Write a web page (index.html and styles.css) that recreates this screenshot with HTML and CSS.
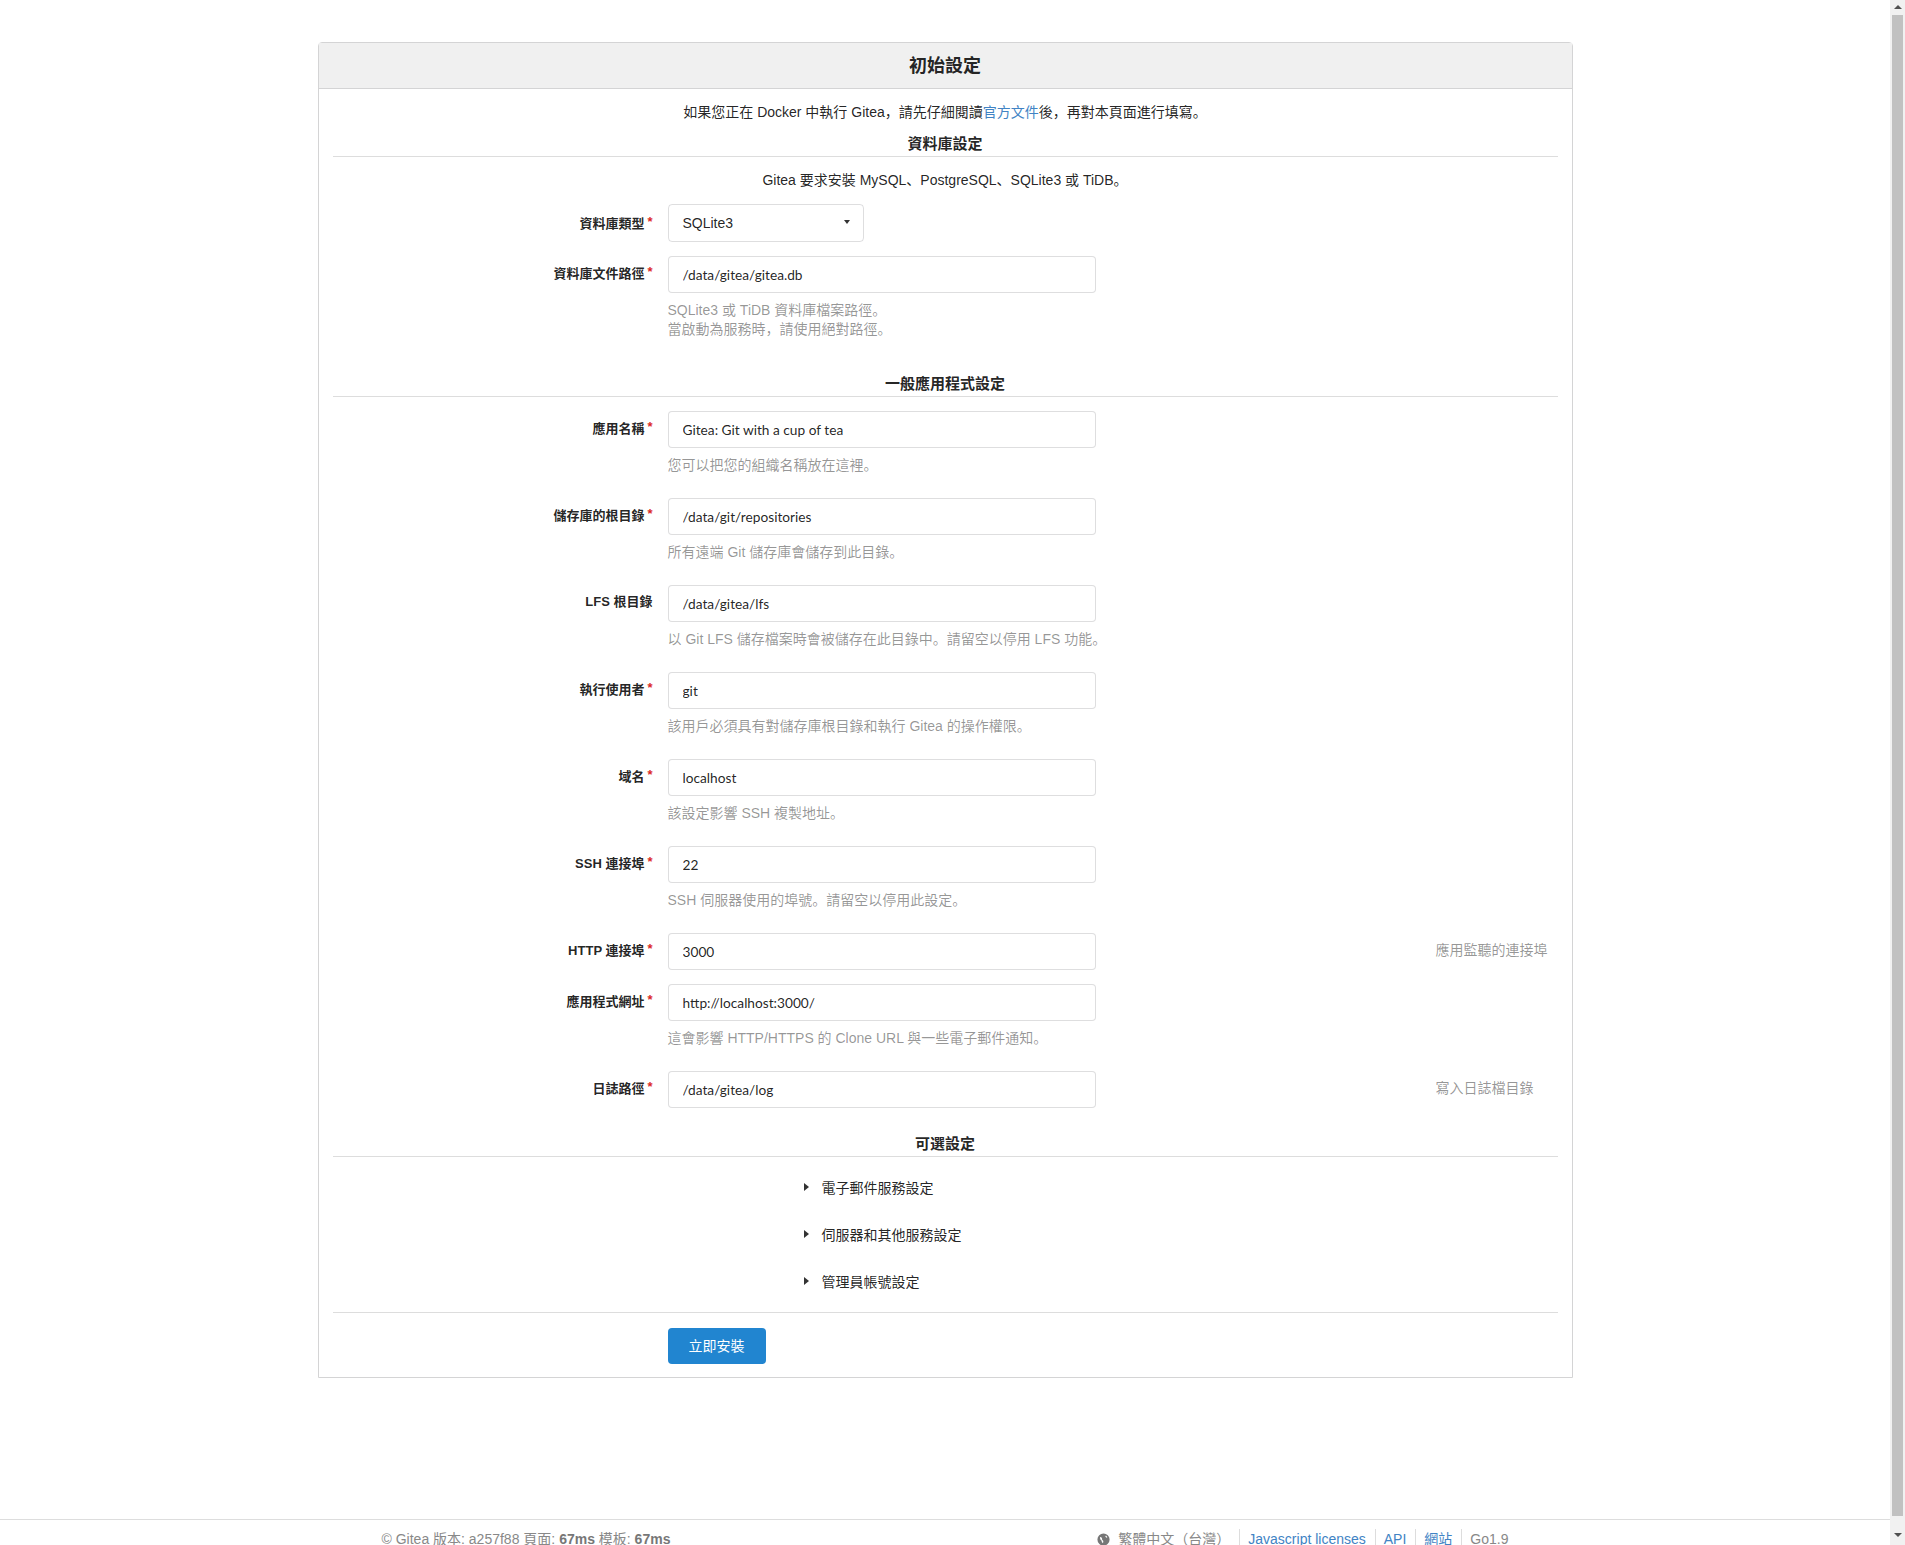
FILE: index.html
```html
<!DOCTYPE html>
<html lang="zh">
    <head>
        <meta charset="UTF-8" />
        <title>初始設定 - Gitea</title>
        <link rel="stylesheet" href="styles.css">
    </head>
    <body>
        <div class="page">
            <div class="install">
                <h3 class="install-title">初始設定</h3>
                <form class="install-body" action="" method="post">
                    <p class="center-text">如果您正在 Docker 中執行 Gitea，請先仔細閱讀<a href="#">官方文件</a>後，再對本頁面進行填寫。</p>

                    <!-- 資料庫 -->
                    <h4 class="section">資料庫設定</h4>
                    <p class="center-text db-note">Gitea 要求安裝 MySQL、PostgreSQL、SQLite3 或 TiDB。</p>
                    <div class="field">
                        <label class="required select-label">資料庫類型</label>
                        <div class="select">SQLite3<span class="select-arrow"></span></div>
                    </div>
                    <div class="field">
                        <label class="required">資料庫文件路徑</label>
                        <input type="text" value="/data/gitea/gitea.db">
                    </div>
                    <div class="help">SQLite3 或 TiDB 資料庫檔案路徑。<br>當啟動為服務時，請使用絕對路徑。</div>

                    <!-- 一般設定 -->
                    <h4 class="section">一般應用程式設定</h4>
                    <div class="field">
                        <label class="required">應用名稱</label>
                        <input type="text" value="Gitea: Git with a cup of tea">
                    </div>
                    <div class="help">您可以把您的組織名稱放在這裡。</div>
                    <div class="field">
                        <label class="required">儲存庫的根目錄</label>
                        <input type="text" value="/data/git/repositories">
                    </div>
                    <div class="help">所有遠端 Git 儲存庫會儲存到此目錄。</div>
                    <div class="field">
                        <label>LFS 根目錄</label>
                        <input type="text" value="/data/gitea/lfs">
                    </div>
                    <div class="help">以 Git LFS 儲存檔案時會被儲存在此目錄中。請留空以停用 LFS 功能。</div>
                    <div class="field">
                        <label class="required">執行使用者</label>
                        <input type="text" value="git">
                    </div>
                    <div class="help">該用戶必須具有對儲存庫根目錄和執行 Gitea 的操作權限。</div>
                    <div class="field">
                        <label class="required">域名</label>
                        <input type="text" value="localhost">
                    </div>
                    <div class="help">該設定影響 SSH 複製地址。</div>
                    <div class="field">
                        <label class="required">SSH 連接埠</label>
                        <input type="text" value="22">
                    </div>
                    <div class="help">SSH 伺服器使用的埠號。請留空以停用此設定。</div>
                    <div class="field">
                        <label class="required">HTTP 連接埠</label>
                        <input type="text" value="3000">
                        <span class="side-help">應用監聽的連接埠</span>
                    </div>
                    <div class="field">
                        <label class="required">應用程式網址</label>
                        <input type="text" value="http://localhost:3000/">
                    </div>
                    <div class="help">這會影響 HTTP/HTTPS 的 Clone URL 與一些電子郵件通知。</div>
                    <div class="field">
                        <label class="required">日誌路徑</label>
                        <input type="text" value="/data/gitea/log">
                        <span class="side-help">寫入日誌檔目錄</span>
                    </div>

                    <!-- 可選設定 -->
                    <h4 class="section">可選設定</h4>
                    <details class="optional"><summary>電子郵件服務設定</summary></details>
                    <details class="optional"><summary>伺服器和其他服務設定</summary></details>
                    <details class="optional"><summary>管理員帳號設定</summary></details>

                    <div class="actions">
                        <button type="button" class="install-btn">立即安裝</button>
                    </div>
                </form>
            </div>

            <div class="footer">
                <div class="footer-inner">
                    <div class="footer-left">© Gitea 版本: a257f88 頁面: <b>67ms</b> 模板: <b>67ms</b></div>
                    <div class="footer-right">
                        <svg class="globe" viewBox="0 0 16 16" width="13" height="13">
                            <path fill="#777" fill-rule="evenodd" d="M8 .5a7.5 7.5 0 1 0 0 15 7.5 7.5 0 0 0 0-15zM11 3.2l1.2 1 .4 1.600-1.400-.4-1-1.100zM3.600 5l1.600.2 1 1.300.1 1.800 1.300 1.200.2 1.700-.6 1.300-1.200-1.400-.5-1.800-1.500-1.600z"/>
                        </svg>
                        <span class="lang">繁體中文（台灣）</span>
                        <a class="foot-item" href="#">Javascript licenses</a>
                        <a class="foot-item" href="#">API</a>
                        <a class="foot-item" href="#">網站</a>
                        <span class="foot-item">Go1.9</span>
                    </div>
                </div>
            </div>
        </div>

        <div class="scrollbar">
            <span class="arrow-up"></span>
            <div class="thumb"></div>
            <span class="arrow-down"></span>
        </div>
    </body>
</html>
```

FILE: styles.css
```css
html, body{
    margin: 0;
    padding: 0;
    height: 100%;
}

body{
    display: flex;
    overflow: hidden;
    color: rgba(0,0,0,.87);
    background-color: #fff;
    font-family: "Liberation Sans", "Noto Sans CJK SC", sans-serif;
    font-size: 14px;
    line-height: 20px;
}

a{
    color: #4183c4;
    text-decoration: none;
}

.page{
    flex: 1;
    min-width: 0;
    overflow: hidden;
    padding-top: 42px;
}

/* card */
.install{
    width: 1255px;
    margin: 0 auto;
    box-sizing: border-box;
    border: 1px solid #d4d4d5;
    border-radius: 4px 4px 0 0;
}

.install-title{
    margin: 0;
    height: 45px;
    line-height: 47px;
    text-align: center;
    font-size: 18px;
    background-color: #f0f0f0;
    border-bottom: 1px solid #d4d4d5;
}

.install-body{
    display: flex;
    flex-direction: column;
    padding: 13px 14px 13px;
}

.center-text{
    margin: 0;
    text-align: center;
}

.db-note{
    margin: -1px 0 14px;
}

.section{
    margin: 9px 0 14px;
    height: 25px;
    line-height: 25px;
    text-align: center;
    font-size: 15px;
    border-bottom: 1px solid #ddd;
}

/* form rows */
.field{
    display: flex;
    align-items: center;
    margin-bottom: 14px;
}

.field:has(+ .help){
    margin-bottom: 0;
}

.field label{
    width: 320px;
    margin: 0 15px 4px 0;
    flex-shrink: 0;
    text-align: right;
    font-size: 13px;
    font-weight: bold;
}

.field .select-label{
    margin-bottom: 0;
}

.required::after{
    content: "*";
    color: #db2828;
    margin-left: 3px;
    vertical-align: 2px;
}

input{
    width: 428px;
    height: 37px;
    box-sizing: border-box;
    padding: 0 14px 1px;
    border: 1px solid rgba(34,36,38,.15);
    border-radius: 4px;
    color: rgba(0,0,0,.87);
    font-family: Lato, "Noto Sans CJK SC", sans-serif;
    font-size: 13.7px;
}

.select{
    width: 196px;
    height: 38px;
    line-height: 36px;
    box-sizing: border-box;
    padding: 0 14px;
    border: 1px solid rgba(34,36,38,.15);
    border-radius: 4px;
    position: relative;
}

.select-arrow{
    position: absolute;
    right: 13px;
    top: 15px;
    border-left: 3.5px solid transparent;
    border-right: 3.5px solid transparent;
    border-top: 4px solid #333;
}

.help{
    margin: 0 0 14px 335px;
    padding: 8px 0 9px;
    line-height: 19px;
    color: rgba(0,0,0,.42);
}

.side-help{
    margin: 0 0 3px 340px;
    color: rgba(0,0,0,.42);
}

/* optional sections */
.optional{
    margin: 0 0 14px 471px;
}

.optional summary{
    height: 33px;
    box-sizing: border-box;
    padding-top: 1px;
    line-height: 32px;
    list-style: none;
    display: flex;
    align-items: center;
}

.optional summary::before{
    content: "";
    margin: -3px 13px 0 0;
    border-top: 4px solid transparent;
    border-bottom: 4px solid transparent;
    border-left: 5px solid #333;
}

.actions{
    border-top: 1px solid #ddd;
    padding: 15px 0 0 335px;
}

.install-btn{
    width: 98px;
    height: 36px;
    padding: 0 0 2px;
    border: 0;
    border-radius: 4px;
    background-color: #2185d0;
    color: #fff;
    font-family: inherit;
    font-size: 14px;
}

/* footer */
.footer{
    margin-top: 141px;
    border-top: 1px solid #ddd;
    padding-top: 9px;
    color: #888;
}

.footer-inner{
    width: 1127px;
    margin: 0 auto;
    display: flex;
    justify-content: space-between;
}

.footer-left b{
    color: #777;
}

.footer-right{
    display: flex;
    align-items: center;
}

.globe{
    margin-right: 8px;
}

.lang{
    margin-right: 9px;
}

.foot-item{
    border-left: 1px solid #ddd;
    padding: 0 9px 0 8px;
}

.foot-item:last-child{
    padding-right: 0;
}

/* scrollbar */
.scrollbar{
    width: 15px;
    flex-shrink: 0;
    display: flex;
    flex-direction: column;
    align-items: center;
    background-color: #f1f1f1;
}

.arrow-up,
.arrow-down{
    flex-shrink: 0;
    border-left: 4px solid transparent;
    border-right: 4px solid transparent;
}

.arrow-up{
    margin: 5px 0 6px;
    border-bottom: 4px solid #505050;
}

.arrow-down{
    margin: 17px 0 8px;
    border-top: 4px solid #505050;
}

.thumb{
    flex: 1;
    width: 11px;
    background-color: #c1c1c1;
}
```
